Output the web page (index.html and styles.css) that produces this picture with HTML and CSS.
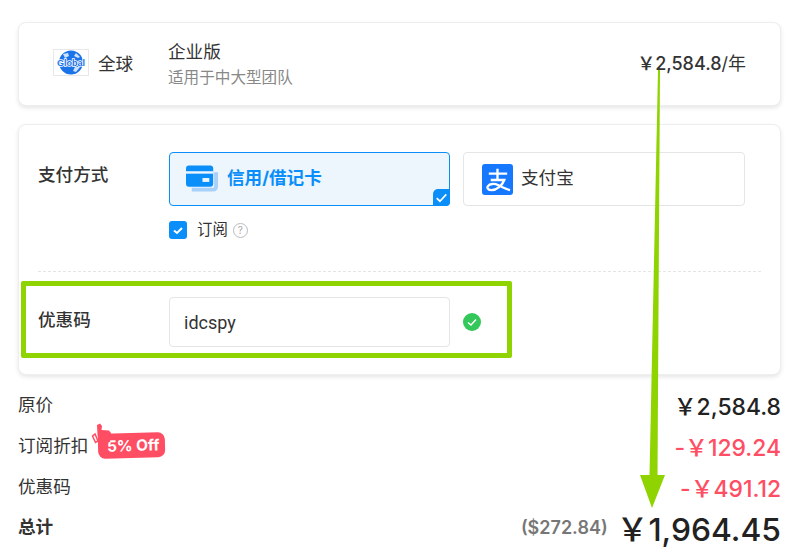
FILE: index.html
```html
<!DOCTYPE html>
<html lang="zh-CN">
<head>
    <meta charset="UTF-8">
    <title>订单</title>
    <link rel="stylesheet" href="styles.css">
</head>
<body>

<div class="card plan-card">
    <div class="region">
        <svg class="region-icon" viewBox="0 0 36 27">
            <rect x="0.5" y="0.5" width="35" height="26" fill="#fff" stroke="#e8e8e8"/>
            <circle cx="18" cy="13.500" r="12" fill="#1a73e8"/>
            <path d="M10 5l5-1 1 3-4 2zM23 4l4 4-2 1-4-2zM27 18l-4 5-3-1 2-4z" fill="#cfe2fb"/>
            <text x="18" y="17" class="globe-text" text-anchor="middle">Global</text>
        </svg>
        <span>全球</span>
    </div>
    <div class="plan-info">
        <div class="plan-name">企业版</div>
        <div class="plan-desc">适用于中大型团队</div>
    </div>
    <div class="plan-price"><span class="yen">￥</span>2,584.8<span class="unit">/年</span></div>
</div>

<div class="card form-card">
    <div class="form-row pay-row">
        <div class="form-label">支付方式</div>
        <div class="form-body">
            <div class="pay-options">
                <div class="pay-option active">
                    <svg class="card-icon" viewBox="0 0 34 28">
                        <path d="M6 25h22a3 3 0 0 0 3-3V7" fill="none" stroke="#a8d0f8" stroke-width="4"/>
                        <rect x="0" y="0" width="28" height="22" rx="3" fill="#0a8ffa"/>
                        <rect x="0" y="6" width="28" height="2.500" fill="#edf5fd"/>
                        <rect x="17" y="13" width="7" height="4" fill="#edf5fd"/>
                    </svg>
                    <span>信用/借记卡</span>
                    <span class="corner-check">
                        <svg viewBox="0 0 16 16"><path d="M3.500 8.500l3 3 6-6.500" fill="none" stroke="#fff" stroke-width="1.600"/></svg>
                    </span>
                </div>
                <div class="pay-option">
                    <svg class="alipay-icon" viewBox="0 0 32 32">
                        <rect width="32" height="32" rx="3" fill="#1677ff"/>
                        <path d="M7 10H26M16 5V16M9 16.500H23C21 22 15 27 10 27C6 27 5 24.500 6 23C8 20 13 20 17 22C21 24 25 26 29 27" fill="none" stroke="#fff" stroke-width="2.400"/>
                    </svg>
                    <span>支付宝</span>
                </div>
            </div>
            <div class="subscribe">
                <span class="checkbox">
                    <svg viewBox="0 0 18 18"><path d="M5 9.500l3 2.500 5-5" fill="none" stroke="#fff" stroke-width="2"/></svg>
                </span>
                <span>订阅</span>
                <span class="help">?</span>
            </div>
        </div>
    </div>
    <div class="dashed"></div>
    <div class="form-row coupon-row">
        <div class="form-label">优惠码</div>
        <input class="coupon-input" type="text" value="idcspy">
        <svg class="ok-icon" viewBox="0 0 18 18">
            <circle cx="9" cy="9" r="9" fill="#34c759"/>
            <path d="M5 9.500l3 2.500 5-5.500" fill="none" stroke="#fff" stroke-width="1.500"/>
        </svg>
    </div>
</div>

<div class="summary">
    <div class="sum-row">
        <div class="sum-label">原价</div>
        <div class="amount"><span class="yen">￥</span>2,584.8</div>
    </div>
    <div class="sum-row">
        <div class="sum-label discount-label">
            <span>订阅折扣</span>
            <span class="off-badge">5% Off</span>
            <svg class="hand-icon" viewBox="0 0 20 24">
                <path d="M6 3L9 1.500L11 4L10.500 8L18 8.500L20 11L19 20L8 22L6.500 13z" fill="#ff4d64"/>
                <path d="M1.500 14L4 12L7 19L4.500 20.500z" fill="#fff" stroke="#ff4d64" stroke-width="1.500"/>
            </svg>
        </div>
        <div class="amount red">-<span class="yen">￥</span>129.24</div>
    </div>
    <div class="sum-row">
        <div class="sum-label">优惠码</div>
        <div class="amount red">-<span class="yen">￥</span>491.12</div>
    </div>
    <div class="sum-row total-row">
        <div class="sum-label total-label">总计</div>
        <div class="total-values">
            <span class="usd">($272.84)</span>
            <span class="total"><span class="yen">￥</span>1,964.45</span>
        </div>
    </div>
</div>

<!-- annotations drawn over the screenshot -->
<div class="mark-box"></div>
<svg class="mark-arrow" viewBox="0 0 798 559">
    <path d="M658 70H660L657.500 476H649.500z" fill="#8fd400"/>
    <path d="M640 475L665 475L652 508z" fill="#8fd400"/>
</svg>

</body>
</html>
```

FILE: styles.css
```css
body {
    font-family: Inter, "Noto Sans CJK SC", sans-serif;
    color: #333;
    background-color: #fff;
    margin: 0;
    padding: 22px 17px 0 18px;
    height: 559px;
    box-sizing: border-box;
    overflow: hidden;
    position: relative;
}
.card {
    background-color: #fff;
    border: 1px solid #eee;
    border-radius: 8px;
    box-shadow: 0 2px 4px rgba(0, 0, 0, 0.1);
}
.yen {
    font-family: "Noto Sans CJK SC", sans-serif;
}

.plan-card {
    display: flex;
    align-items: center;
    height: 84px;
    box-sizing: border-box;
    padding: 0 34px 0 34px;
    margin-bottom: 18px;
}
.region {
    display: flex;
    align-items: center;
    gap: 9px;
    width: 115px;
    font-size: 17.6px;
    margin-top: -3px;
}
.region-icon {
    width: 36px;
    height: 27px;
}
.globe-text {
    font-family: "Liberation Sans", sans-serif;
    font-size: 9px;
    font-weight: bold;
    fill: #1a73e8;
    stroke: #fff;
    stroke-width: 1.5px;
    paint-order: stroke;
}
.plan-info {
    flex: 1;
    margin-top: 2px;
}
.plan-name {
    font-size: 17.6px;
    line-height: 26px;
}
.plan-desc {
    font-size: 15.6px;
    line-height: 26px;
    color: #888;
}
.plan-price {
    font-size: 18px;
    font-weight: 500;
    margin-top: -4px;
}
.unit {
    font-weight: 400;
}

.form-card {
    height: 251px;
    box-sizing: border-box;
    padding: 27px 19px 0;
    margin-bottom: 10px;
}
.form-row {
    display: flex;
}
.form-label {
    width: 131px;
    font-size: 17.6px;
    font-weight: 500;
}
.pay-row .form-label {
    line-height: 46px;
}
.pay-options {
    display: flex;
    gap: 13px;
}
.pay-option {
    width: 282px;
    height: 54px;
    box-sizing: border-box;
    border: 1px solid #e5e5e5;
    border-radius: 4px;
    display: flex;
    align-items: center;
    gap: 8px;
    padding: 0 0 5px 18px;
    font-size: 17.6px;
    position: relative;
}
.pay-option.active {
    width: 281px;
    border-color: #0a8ffa;
    background-color: #edf5fd;
    color: #0a8ffa;
    font-weight: 700;
    padding-left: 16px;
}
.card-icon {
    width: 33px;
    height: 28px;
    margin-top: 5px;
}
.alipay-icon {
    width: 31px;
    height: 31px;
    margin-top: 5px;
}
.corner-check {
    position: absolute;
    right: -1px;
    bottom: -1px;
    width: 17px;
    height: 17px;
    background-color: #0a8ffa;
    border-radius: 5px 0 4px 0;
}
.corner-check svg {
    display: block;
}
.subscribe {
    display: flex;
    align-items: center;
    gap: 10px;
    margin-top: 15px;
    font-size: 15.4px;
    line-height: 18px;
}
.checkbox {
    width: 18px;
    height: 18px;
    background-color: #0a8ffa;
    border-radius: 3px;
}
.checkbox svg {
    display: block;
}
.help {
    width: 13px;
    height: 13px;
    border: 1px solid #bbb;
    border-radius: 50%;
    color: #aaa;
    font-size: 10px;
    line-height: 13px;
    text-align: center;
    margin-left: -5px;
}
.dashed {
    border-top: 1px dashed #e5e5e5;
    margin-top: 32px;
}
.coupon-row {
    align-items: center;
    margin-top: 25px;
}
.coupon-row .form-label {
    margin-top: -8px;
}
.coupon-input {
    width: 281px;
    height: 50px;
    box-sizing: border-box;
    border: 1px solid #e5e5e5;
    border-radius: 4px;
    padding: 0 14px;
    font-family: Roboto, sans-serif;
    font-size: 18px;
    color: #333;
    outline: none;
}
.ok-icon {
    width: 18px;
    height: 18px;
    margin-left: 13px;
}

.summary {
    display: flex;
    flex-direction: column;
}
.sum-row {
    display: flex;
    justify-content: space-between;
    align-items: center;
    height: 40.7px;
    font-size: 17.6px;
}
.sum-label {
    margin-top: -3px;
}
.amount {
    font-size: 22.9px;
    font-weight: 500;
    color: #222;
}
.amount.red {
    color: #ff4d64;
}
.discount-label {
    position: relative;
    display: flex;
    align-items: center;
    gap: 10px;
}
.off-badge {
    background-color: #ff4d64;
    color: #fff;
    font-size: 15.4px;
    font-weight: 700;
    line-height: 25px;
    padding: 0 5px 0 9px;
    border-radius: 7px;
    margin-top: 2px;
    transform: rotate(-1.5deg);
}
.hand-icon {
    position: absolute;
    left: 73px;
    top: -9px;
    width: 20px;
    height: 24px;
}
.total-label {
    font-weight: 700;
}
.total-values {
    display: flex;
    align-items: center;
    gap: 9px;
}
.usd {
    font-size: 18px;
    font-weight: 600;
    color: #777;
}
.total {
    font-size: 31.8px;
    font-weight: 500;
    color: #222;
}

.mark-box {
    position: absolute;
    left: 21px;
    top: 281px;
    width: 491px;
    height: 77px;
    box-sizing: border-box;
    border: 5px solid #8fd400;
    border-radius: 2px;
}
.mark-arrow {
    position: absolute;
    left: 0;
    top: 0;
    width: 798px;
    height: 559px;
}
```
